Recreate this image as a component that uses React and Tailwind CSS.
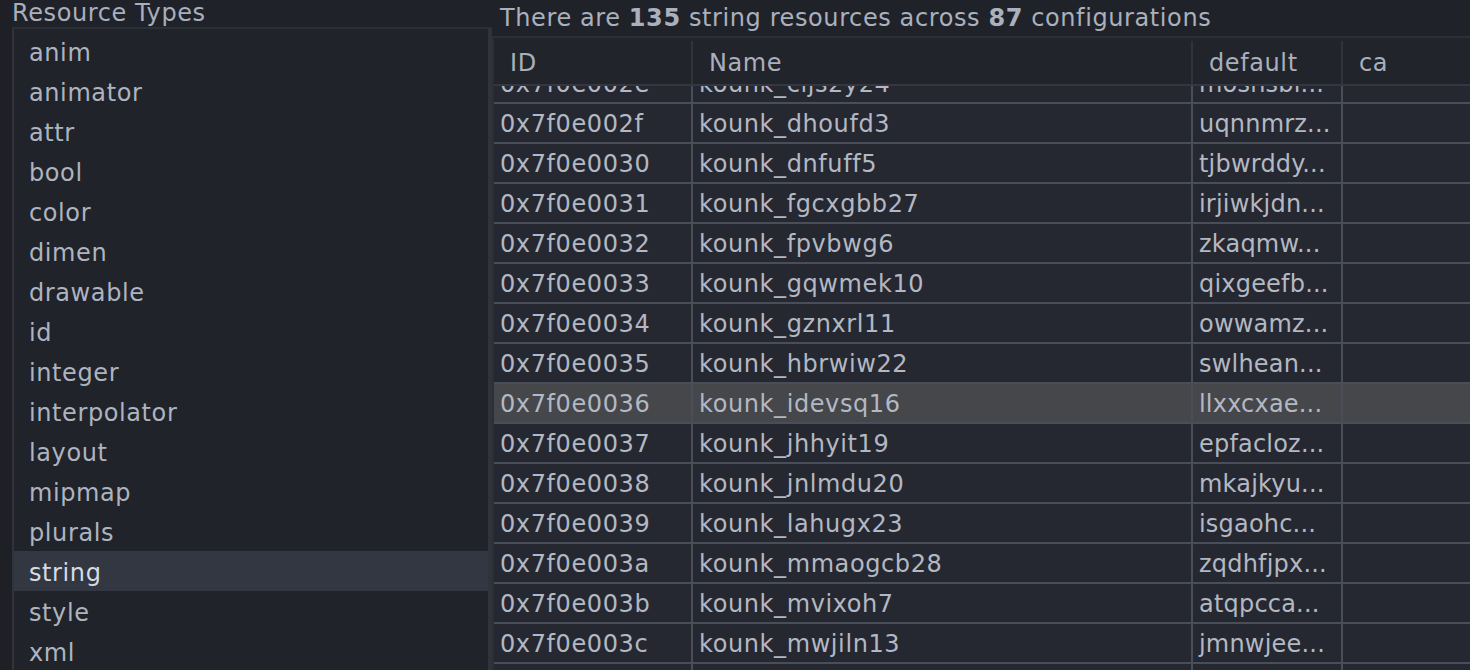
import React from 'react';

const types = [
    'anim', 'animator', 'attr', 'bool', 'color', 'dimen', 'drawable', 'id',
    'integer', 'interpolator', 'layout', 'mipmap', 'plurals', 'string', 'style', 'xml',
];

// rows as shown in the table (first one is scrolled half out of view)
const rows = [
    ['0x7f0e002e', 'kounk_cljs2y24', 'mosnsbi...'],
    ['0x7f0e002f', 'kounk_dhoufd3', 'uqnnmrz...'],
    ['0x7f0e0030', 'kounk_dnfuff5', 'tjbwrddy...'],
    ['0x7f0e0031', 'kounk_fgcxgbb27', 'irjiwkjdn...'],
    ['0x7f0e0032', 'kounk_fpvbwg6', 'zkaqmw...'],
    ['0x7f0e0033', 'kounk_gqwmek10', 'qixgeefb...'],
    ['0x7f0e0034', 'kounk_gznxrl11', 'owwamz...'],
    ['0x7f0e0035', 'kounk_hbrwiw22', 'swlhean...'],
    ['0x7f0e0036', 'kounk_idevsq16', 'llxxcxae...'],
    ['0x7f0e0037', 'kounk_jhhyit19', 'epfacloz...'],
    ['0x7f0e0038', 'kounk_jnlmdu20', 'mkajkyu...'],
    ['0x7f0e0039', 'kounk_lahugx23', 'isgaohc...'],
    ['0x7f0e003a', 'kounk_mmaogcb28', 'zqdhfjpx...'],
    ['0x7f0e003b', 'kounk_mvixoh7', 'atqpcca...'],
    ['0x7f0e003c', 'kounk_mwjiln13', 'jmnwjee...'],
    ['0x7f0e003d', 'kounk_nqzrwe9', 'bvkdyrt...'],
];

const font = { fontFamily: '"DejaVu Sans", "Liberation Sans", sans-serif' };

export default function App() {
    return (
        <div className="flex h-[670px] w-[1470px] overflow-hidden bg-[#1e2026] text-[24px] leading-none tracking-[0.6px]" style={font}>
            {/* Left: resource types */}
            <div className="flex w-[492px] shrink-0 flex-col pl-[12px]">
                <div className="flex h-[29px] items-center border-b-2 border-[#2c2f36] bg-[#20222a] text-[#a9afbb]">
                    <span className="-mt-[1px]">Resource Types</span>
                </div>
                <div className="flex-1 overflow-hidden border-l-2 border-r-4 border-[#30333b] bg-[#21232a] pt-[2px]">
                    {types.map((t) => (
                        <div
                            key={t}
                            className={`flex h-[40px] items-center pl-[15px] pt-[4px] ${t === 'string' ? 'bg-[#333741] text-[#d6dbe3]' : 'text-[#aeb4bf]'}`}
                        >
                            {t}
                        </div>
                    ))}
                </div>
            </div>

            {/* Right: table */}
            <div className="flex min-w-0 flex-1 flex-col">
                <div className="flex h-[38px] items-center border-b-2 border-[#2c2f36] bg-[#20222a] pl-[8px] text-[#aab0bc]">
                    <span className="whitespace-nowrap">
                        There are <b className="font-bold">135</b> string resources across <b className="font-bold">87</b> configurations
                    </span>
                </div>
                <div className="flex flex-1 flex-col overflow-hidden border-l-2 border-[#2c2f36] bg-[#262831]">
                    {/* header */}
                    <div className="flex h-[48px] shrink-0 border-b-2 border-[#34373f] bg-[#22242b] pt-[3px] text-[#a9afbb]">
                        <div className="flex w-[199px] shrink-0 items-center border-r-2 border-[#30333a] pl-[16px]">ID</div>
                        <div className="flex w-[500px] shrink-0 items-center border-r-2 border-[#30333a] pl-[16px]">Name</div>
                        <div className="flex w-[150px] shrink-0 items-center border-r-2 border-[#30333a] pl-[16px]">default</div>
                        <div className="flex flex-1 items-center pl-[16px]">ca</div>
                    </div>
                    {/* body, scrolled */}
                    <div className="flex-1 overflow-hidden">
                        <div className="-mt-[22px]">
                            {rows.map(([id, name, val]) => (
                                <div
                                    key={id}
                                    className={`flex h-[40px] border-b-2 border-[#4a4e58] ${id === '0x7f0e0036' ? 'bg-[#45474b]' : ''} text-[#b3b8c3]`}
                                >
                                    <div className="flex w-[199px] shrink-0 items-center whitespace-nowrap border-r-2 border-[#4a4e58] pl-[6px] pt-[2px]">{id}</div>
                                    <div className="flex w-[500px] shrink-0 items-center whitespace-nowrap border-r-2 border-[#4a4e58] pl-[6px] pt-[2px]">{name}</div>
                                    <div className="flex w-[150px] shrink-0 items-center overflow-hidden whitespace-nowrap border-r-2 border-[#4a4e58] pl-[6px] pt-[2px] tracking-[0.2px]">{val}</div>
                                    <div className="flex-1" />
                                </div>
                            ))}
                        </div>
                    </div>
                </div>
            </div>
        </div>
    );
}
